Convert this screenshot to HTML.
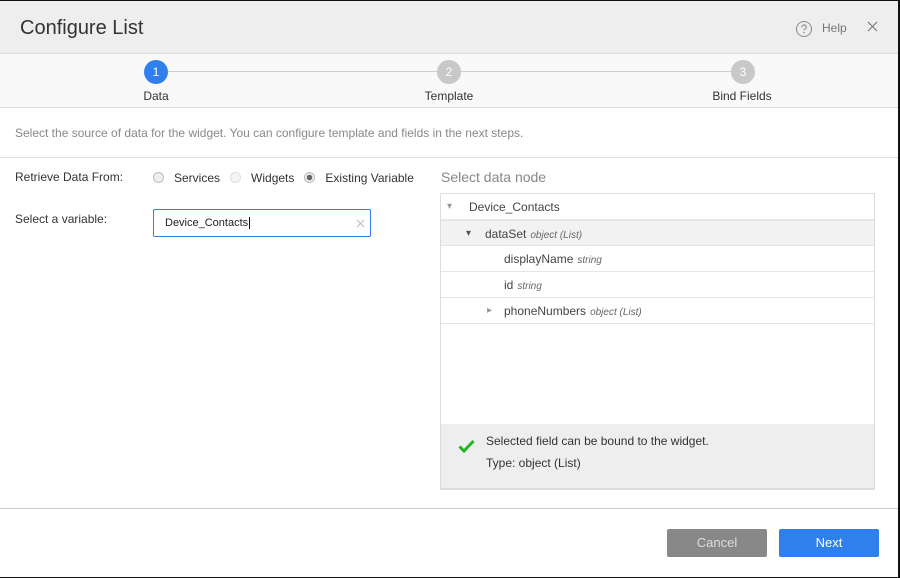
<!DOCTYPE html>
<html><head><style>
*{box-sizing:border-box;margin:0;padding:0}
body{width:900px;height:578px;background:#fff;font-family:"Liberation Sans",sans-serif;position:relative;overflow:hidden;color:#333}
.frame{position:absolute;inset:0;border-top:1px solid #111;border-right:2px solid #111;border-bottom:1px solid #111}
.hdr{position:absolute;left:0;top:1px;width:898px;height:53px;background:#eee;border-bottom:1px solid #ddd}
.hdr h1{position:absolute;left:20px;top:16px;font-size:20px;font-weight:normal;color:#333}
.abs{position:absolute}
.step{position:absolute;top:60px;width:24px;height:24px;border-radius:50%;color:#fff;font-size:12px;text-align:center;line-height:24px}
.lbl{position:absolute;top:89px;font-size:12px;color:#333;transform:translateX(-50%)}
.row{position:absolute;left:0;width:433px;height:26px;border-bottom:1px solid #e6e6e6;font-size:12px;line-height:26px;color:#444}
.row i{font-size:10px;color:#666;margin-left:4px}
.radio{display:inline-block;width:11px;height:11px;border-radius:50%;border:1px solid #bbb;background:#eee;vertical-align:-1px}
.tri{position:absolute;top:0;font-size:10px}
</style></head><body>
<div class="hdr"><h1>Configure List</h1>
<svg class="abs" style="left:795px;top:19px" width="18" height="18" viewBox="0 0 18 18"><circle cx="9" cy="9" r="7.5" fill="none" stroke="#888" stroke-width="1"/><path d="M6.8 7.2a2.2 2.2 0 1 1 3 2c-.6.3-.8.7-.8 1.3" fill="none" stroke="#888" stroke-width="1"/><circle cx="9" cy="12.6" r=".7" fill="#888"/></svg>
<div class="abs" style="left:822px;top:20px;font-size:12px;color:#777">Help</div>
<svg class="abs" style="left:867px;top:20px" width="11" height="11" viewBox="0 0 11 11"><path d="M1 1L10 10M10 1L1 10" stroke="#777" stroke-width="1.1"/></svg>
</div>
<div class="abs" style="left:0;top:54px;width:898px;height:54px;background:#f9f9f9;border-bottom:1px solid #ddd"></div>
<div class="abs" style="left:168px;top:71px;width:575px;height:1px;background:#ccc"></div>
<div class="step" style="left:144px;background:#2f80ed">1</div>
<div class="step" style="left:437px;background:#c8c8c8">2</div>
<div class="step" style="left:731px;background:#c8c8c8">3</div>
<div class="lbl" style="left:156px">Data</div>
<div class="lbl" style="left:449px">Template</div>
<div class="lbl" style="left:742px">Bind Fields</div>
<div class="abs" style="left:15px;top:126px;font-size:12px;color:#888">Select the source of data for the widget. You can configure template and fields in the next steps.</div>
<div class="abs" style="left:0;top:157px;width:898px;height:1px;background:#ddd"></div>
<div class="abs" style="left:15px;top:170px;font-size:12px">Retrieve Data From:</div>
<div class="abs" style="left:153px;top:171px;font-size:12px;white-space:nowrap"><span class="radio"></span>&nbsp;&nbsp;&nbsp;Services&nbsp;&nbsp;&nbsp;<span class="radio" style="border-color:#ddd;background:#f5f5f5"></span>&nbsp;&nbsp;&nbsp;Widgets&nbsp;&nbsp;&nbsp;<span class="radio" style="background:radial-gradient(circle,#666 0 2.5px,#eee 3px)"></span>&nbsp;&nbsp;&nbsp;Existing Variable</div>
<div class="abs" style="left:15px;top:212px;font-size:12px">Select a variable:</div>
<div class="abs" style="left:153px;top:209px;width:218px;height:28px;border:1px solid #2f80ed;border-radius:2px;font-size:11px;line-height:26px;padding-left:11px;color:#222">Device_Contacts<span style="border-left:1px solid #000;margin-left:1px"></span>
<svg class="abs" style="left:202px;top:9px" width="9" height="9"><path d="M1 1L8 8M8 1L1 8" stroke="#bbb" stroke-width="1"/></svg></div>
<div class="abs" style="left:441px;top:169px;font-size:14px;color:#888">Select data node</div>
<div class="abs" style="left:440px;top:193px;width:435px;height:297px;border:1px solid #ddd">
<div class="row" style="top:0"><span class="tri" style="left:6px;color:#999">▾</span><span style="margin-left:28px">Device_Contacts</span></div>
<div class="row" style="top:26px;background:#f2f2f2;border-top:1px solid #e6e6e6"><span class="tri" style="left:25px;color:#555">▾</span><span style="margin-left:44px">dataSet</span><i>object (List)</i></div>
<div class="row" style="top:52px"><span style="margin-left:63px">displayName</span><i>string</i></div>
<div class="row" style="top:78px"><span style="margin-left:63px">id</span><i>string</i></div>
<div class="row" style="top:104px"><span class="tri" style="left:46px;color:#999">▸</span><span style="margin-left:63px">phoneNumbers</span><i>object (List)</i></div>
<div class="abs" style="left:0;top:230px;width:433px;height:65px;background:#eee;border-bottom:1px solid #ddd">
<svg class="abs" style="left:17px;top:15px" width="17" height="14" viewBox="0 0 17 14"><path d="M1.5 7.5L6 12L15.5 2" fill="none" stroke="#22b422" stroke-width="3"/></svg>
<div class="abs" style="left:45px;top:10px;font-size:12px;color:#333">Selected field can be bound to the widget.</div>
<div class="abs" style="left:45px;top:32px;font-size:12px;color:#333">Type: object (List)</div>
</div></div>
<div class="abs" style="left:0;top:508px;width:898px;height:1px;background:#ccc"></div>
<div class="abs" style="left:667px;top:529px;width:100px;height:28px;background:#888;border-radius:2px;color:#ddd;font-size:13px;text-align:center;line-height:28px">Cancel</div>
<div class="abs" style="left:779px;top:529px;width:100px;height:28px;background:#2f80ed;border-radius:2px;color:#fff;font-size:13px;text-align:center;line-height:28px">Next</div>
<div class="frame"></div>
</body></html>
